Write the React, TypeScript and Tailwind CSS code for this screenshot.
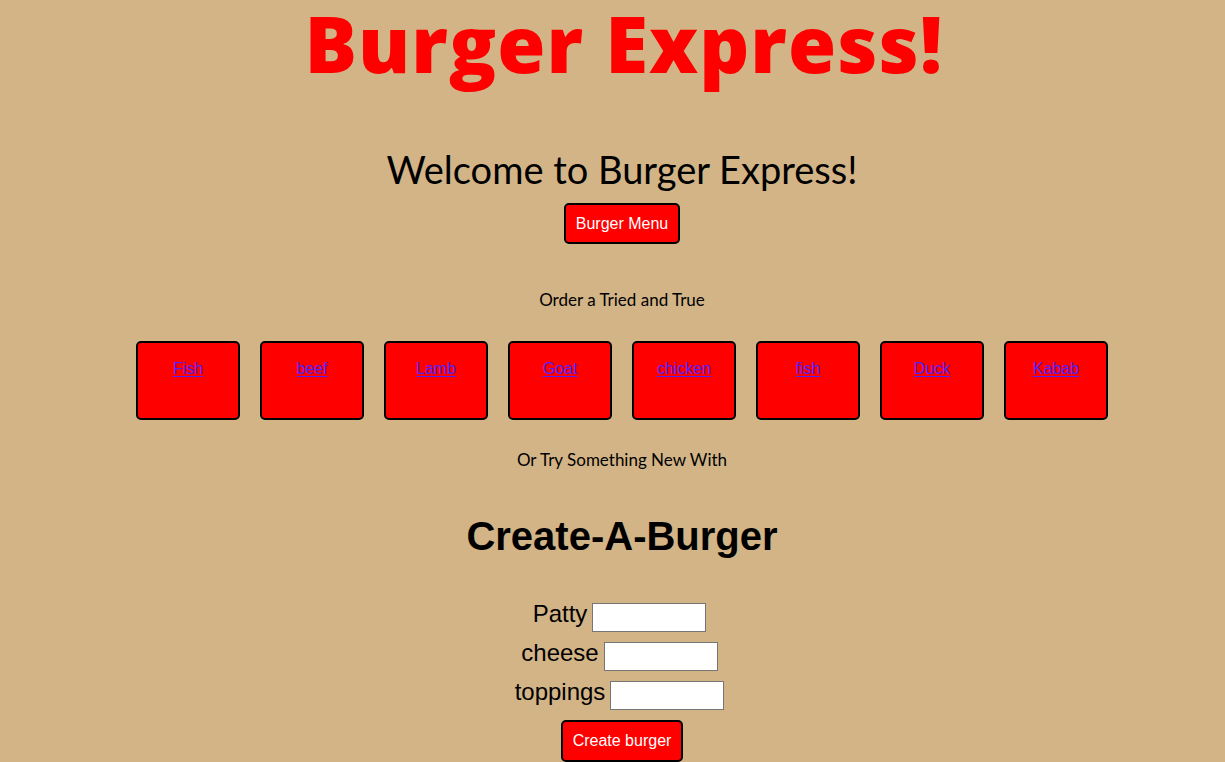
const menu = ["Fish", "beef", "Lamb", "Goat", "chicken", "fish", "Duck", "Kabab"];

const fields = ["Patty", "cheese", "toppings"];

export default function App() {
  return (
    <div className="min-h-[762px] bg-[#d3b487] pl-[19px] text-black">
      <div className="flex flex-col items-center">
        <h1 className="mt-[4px] ml-[4px] font-['Gill_Sans','Open_Sans',sans-serif] text-[78px] leading-[78px] font-extrabold tracking-[1px] text-[#ff0000]">
          Burger Express!
        </h1>

        <h2 className="mt-[67px] font-['Gill_Sans','Lato',sans-serif] text-[38px] leading-[40px]">
          Welcome to Burger Express!
        </h2>

        <button className="mt-[14px] h-[41px] rounded-[5px] border-2 border-black bg-[#ff0000] px-[10px] font-['Liberation_Sans',Arial,sans-serif] text-[16px] text-white">
          Burger Menu
        </button>

        <p className="mt-[46px] font-['Gill_Sans','Lato',sans-serif] text-[17px] leading-[20px]">
          Order a Tried and True
        </p>

        <div className="mt-[31px] flex gap-[20px]">
          {menu.map((item, i) => (
            <div
              key={i}
              className="h-[79px] w-[104px] rounded-[5px] border-2 border-black bg-[#ff0000] pt-[13px] text-center"
            >
              <a
                href="#"
                className="font-['Liberation_Sans',Arial,sans-serif] text-[16px] leading-[18px] text-[#4d22ff] underline decoration-[#4d22ff] decoration-1 underline-offset-[2px]"
              >
                {item}
              </a>
            </div>
          ))}
        </div>

        <p className="mt-[30px] font-['Gill_Sans','Lato',sans-serif] text-[17px] leading-[20px]">
          Or Try Something New With
        </p>

        <h3 className="mt-[43px] font-['Liberation_Sans',Arial,sans-serif] text-[40px] leading-[46px] font-bold">
          Create-A-Burger
        </h3>

        <form className="mt-[39px] mr-[5px] flex flex-col items-center font-['Liberation_Sans',Arial,sans-serif]">
          {fields.map((f) => (
            <div key={f} className="flex h-[39px] items-center gap-[5px]">
              <label className="mb-[8px] text-[24px] leading-[24px]">{f}</label>
              <input
                type="text"
                className="h-[29px] w-[114px] border border-[#767676] bg-white"
              />
            </div>
          ))}
          <button
            type="button"
            className="mt-[5px] ml-[5px] h-[42px] rounded-[5px] border-2 border-black bg-[#ff0000] px-[10px] text-[16px] text-white"
          >
            Create burger
          </button>
        </form>
      </div>
    </div>
  );
}
